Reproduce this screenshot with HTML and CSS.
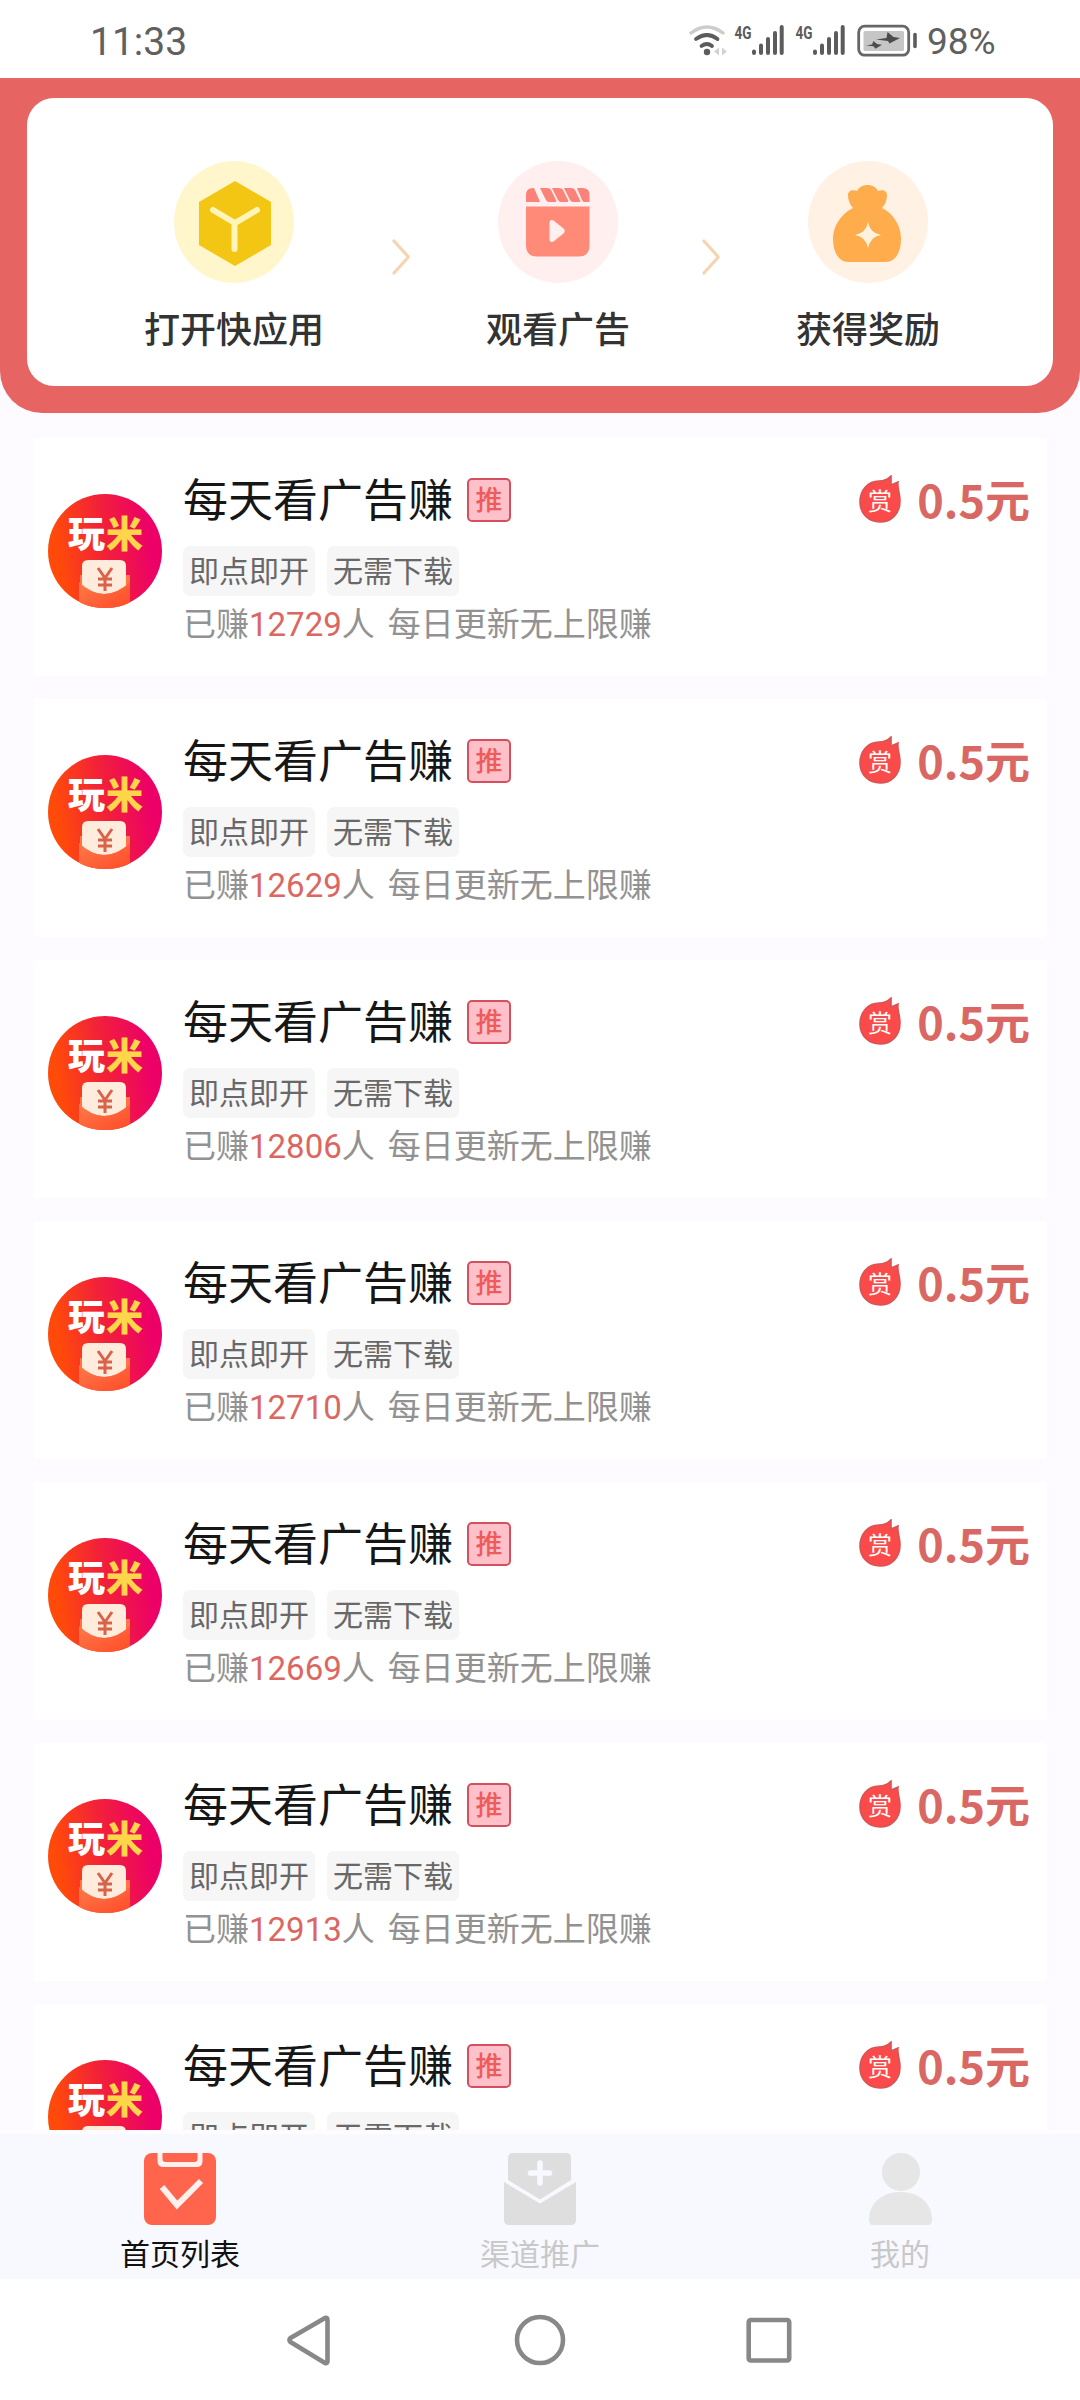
FILE: index.html
```html
<!DOCTYPE html>
<html lang="zh-CN">
<head>
<meta charset="utf-8">
<title>首页列表</title>
<link rel="stylesheet" href="styles.css">
</head>
<body>
<svg class="defs" aria-hidden="true">
  <defs>
    <linearGradient id="logo-bg" x1="0" y1=".5" x2="1" y2=".35"><stop offset=".08" stop-color="#ff4a0a"/><stop offset=".5" stop-color="#f2203a"/><stop offset=".9" stop-color="#ec0068"/></linearGradient>
    <linearGradient id="pocket" x1="0" y1="0" x2="1" y2="1"><stop offset="0" stop-color="#ff7a4a"/><stop offset="1" stop-color="#ff4b28"/></linearGradient>
    <clipPath id="logo-clip"><circle cx="57" cy="57" r="57"/></clipPath>
    <symbol id="logo" viewBox="0 0 114 114">
      <g clip-path="url(#logo-clip)">
        <rect width="114" height="114" fill="url(#logo-bg)"/>
        <path d="M32 81h50v33H32z" fill="#ff7546"/>
        <path d="M34 72q0-6 6-6h32q6 0 6 6v20q-22 16-44 0z" fill="#ffecdc"/>
        <path d="M31 88Q56 112 82 88V114H31z" fill="url(#pocket)"/>
        <path d="M50 74l7 10 7-10M57 84v13M50 85h14M50 91h14" fill="none" stroke="#d9634a" stroke-width="3"/>
      </g>
      <text x="20" y="54" class="logo-text" fill="#fff">玩</text>
      <text x="58" y="54" class="logo-text" fill="#ffd54a">米</text>
    </symbol>
    <symbol id="flame" viewBox="0 0 42 48">
      <path d="M32 1v9l7-3c-1 6 2 11 2 19C41 39 32 47 21 47S1 39 1 27C1 15 9 6 20 6c5 0 9-2 12-5z" fill="#fb4a4a" stroke="#d85454" stroke-width="1.6"/>
      <text x="21" y="34.500" text-anchor="middle" class="flame-text">赏</text>
    </symbol>
  </defs>
</svg>
<div class="screen">
  <header class="status">
    <span class="clock">11:33</span>
    <svg class="status-icons" width="230" height="36" viewBox="688 22 230 36">
      <g fill="none" stroke-linecap="round">
        <path d="M691 32q16-12 32 0" stroke="#ccc" stroke-width="3.4"/>
        <path d="M696 38q11-8 21.500 0M701.500 45q5.500-4 10.500 0" stroke="#5c5c5c" stroke-width="3.800"/>
      </g>
      <circle cx="707" cy="51" r="3.200" fill="#5c5c5c"/>
      <path d="M714 50.500l5-4v8zM727 50.500l-5-4v8z" fill="#d2d2d2"/>
      <g id="signal">
        <text x="734.500" y="37.500" textLength="17" lengthAdjust="spacingAndGlyphs" class="net">4G</text>
        <path d="M754 50.500v1.500M761 44.500v7.500M768 38v14M775 32v20M781.700 26v26" stroke="#5c5c5c" stroke-width="4" stroke-linecap="round"/>
      </g>
      <use href="#signal" x="61"/>
      <rect x="858.700" y="25.200" width="50" height="29" rx="6" fill="none" stroke="#666" stroke-width="2.800"/>
      <rect x="863.500" y="30" width="40.500" height="20" rx="1.500" fill="#c6c6c6"/>
      <path d="M876 38.500l10.500-1.500 1-6 6 5 6.500 1-10.500 5.500-1.500-2.500zM866 44.500l6-1 1.500-3.500 3.500 3 5 .8-6.500 4-2-2.500z" fill="#4c4c4c"/>
      <path d="M915 33.500v12" stroke="#5c5c5c" stroke-width="3.600" stroke-linecap="round"/>
    </svg>
    <span class="percent">98%</span>
  </header>

  <section class="hero">
    <div class="steps">
      <div class="step">
        <svg width="120" height="122" viewBox="0 0 120 122"><ellipse cx="60" cy="61" rx="60" ry="61" fill="#fff6cc"/><path d="M61 20l36 21v43L61 105 25 84V41z" fill="#f3c613"/><path d="M39 49l22 13 22-13M60.500 62v26" fill="none" stroke="#fff5b8" stroke-width="6" stroke-linecap="round"/></svg>
        <span>打开快应用</span>
      </div>
      <svg class="chevron" width="18" height="36" viewBox="0 0 18 36"><path d="M2 2l13.500 15q1 1 0 2L2 34" fill="none" stroke="#f7d4b0" stroke-width="3.200" stroke-linecap="round"/></svg>
      <div class="step">
        <svg width="120" height="122" viewBox="0 0 120 122"><ellipse cx="60" cy="61" rx="60" ry="61" fill="#ffefef"/><path d="M28 45.500h63.500v39q0 11-11 11H39q-11 0-11-11z" fill="#ff8a78"/><path d="M28 41V34q0-7 7-7h1l6 14zM42 27h7q3 0 4 2l5 10q1 2-1 2h-6q-2 0-3-2zM54 27h7q3 0 4 2l5 10q1 2-1 2h-6q-2 0-3-2zM66 27h7q3 0 4 2l5 10q1 2-1 2h-6q-2 0-3-2zM79 27h5.500q7 0 7 7v7H86q-1 0-2-2z" fill="#fb8278"/><path d="M51.500 62q0-4 4-2.500l10 8q2.500 2.500 0 5l-10 8q-4 1.500-4-2.500z" fill="#fff0ee"/></svg>
        <span>观看广告</span>
      </div>
      <svg class="chevron" width="18" height="36" viewBox="0 0 18 36"><path d="M2 2l13.500 15q1 1 0 2L2 34" fill="none" stroke="#f7d4b0" stroke-width="3.200" stroke-linecap="round"/></svg>
      <div class="step">
        <svg width="120" height="122" viewBox="0 0 120 122"><ellipse cx="60" cy="61" rx="60" ry="61" fill="#fff1e3"/><path d="M45 47c-3-3-5-8-5-13 0-4 4-6 9-4 4-8 17-8 21 0 5-2 9 0 9 4 0 5-2 10-5 13 12 6 19 18 19 31 0 15-7 23-15 23H40c-8 0-15-8-15-23 0-13 8-25 20-31z" fill="#ffac4c"/><path d="M60 61q2 11 13 13-11 2-13 13-2-11-13-13 11-2 13-13z" fill="#fff3df"/></svg>
        <span>获得奖励</span>
      </div>
    </div>
  </section>

  <main class="list" id="list"></main>

  <nav class="tabs">
    <div class="tab active">
      <svg width="72" height="72" viewBox="0 0 72 72"><rect width="72" height="72" rx="8" fill="#ff644d"/><path d="M13.500 0v8q0 6 6 6h33q6 0 6-6V0h-5v6q0 3-3 3h-29q-3 0-3-3V0z" fill="#fff0ee"/><path d="M18 34l15 18 24-24" fill="none" stroke="#fff0ee" stroke-width="6"/></svg>
      <span>首页列表</span>
    </div>
    <div class="tab">
      <svg width="72" height="72" viewBox="0 0 72 72"><path d="M4 5q0-5 5-5h53q5 0 5 5v22L36 46.500 4 27zM0 29l36 21.500L72 29v38q0 5-5 5H5q-5 0-5-5z" fill="#dedede"/><path d="M36 10v20M26.500 20h19" stroke="#f8f8ff" stroke-width="5.500" stroke-linecap="round"/></svg>
      <span>渠道推广</span>
    </div>
    <div class="tab">
      <svg width="72" height="72" viewBox="0 0 72 72"><circle cx="37" cy="19" r="19" fill="#e6e6e6"/><path d="M36.500 39C55 39 68 50 68 67q0 5-4 5H9q-4 0-4-5C5 50 18 39 36.500 39z" fill="#e6e6e6"/></svg>
      <span>我的</span>
    </div>
  </nav>

  <footer class="system">
    <svg width="1080" height="60" viewBox="0 0 1080 60" fill="none" stroke="#888" stroke-width="4.600" stroke-linejoin="round"><path d="M290.500 28L325 8q2.500-1 2.500 2v41q0 3-2.500 2L290.500 32q-2-2 0-4z"/><circle cx="540" cy="30" r="23"/><rect x="748.700" y="10" width="40.500" height="40.500" rx="2"/></svg>
  </footer>
</div>
<script src="list.js"></script>
</body>
</html>
```
FILE: list.js
```js
const counts = [12729, 12629, 12806, 12710, 12669, 12913, 12729];

document.getElementById("list").innerHTML = counts.map((count) => `
  <article class="item">
    <svg class="logo" width="114" height="114"><use href="#logo"/></svg>
    <div class="info">
      <div class="title"><h2>每天看广告赚</h2><span class="badge">推</span></div>
      <div class="tags"><span>即点即开</span><span>无需下载</span></div>
      <p class="stats">已赚<em>${count}</em>人<span>每日更新无上限赚</span></p>
    </div>
    <div class="price"><svg width="42" height="48"><use href="#flame"/></svg><b>0.5元</b></div>
  </article>`).join("");
```
FILE: styles.css
```css
* { box-sizing: border-box; }
body { margin: 0; background: #fff; font-family: Roboto, "Noto Sans CJK SC", sans-serif; }
svg { display: block; flex: none; }
.defs { position: absolute; width: 0; height: 0; }
.screen { width: 1080px; height: 2400px; display: flex; flex-direction: column; overflow: hidden; background: #fdfbff; }

.status { height: 78px; flex: none; display: flex; align-items: center; padding: 4px 84px 0 90px; background: #fff; color: #606060; }
.clock { font-size: 39px; line-height: 46px; padding-top: 2px; flex: 1; }
.status-icons { margin-right: 9px; }
.percent { font-size: 37px; line-height: 44px; padding-top: 2px; width: 69px; white-space: nowrap; }
.net { font: bold 18px Roboto, sans-serif; fill: #5c5c5c; }

.hero { height: 335px; flex: none; padding: 20px 27px 27px; background: #e66462; border-radius: 0 0 42px 42px; }
.steps { height: 288px; background: #fff; border-radius: 27px; display: flex; padding: 63px 0 0 117px; }
.step { display: flex; flex-direction: column; align-items: center; font-size: 36px; font-weight: 500; color: #333; }
.step span { line-height: 52px; margin-top: 22px; white-space: nowrap; }
.chevron { margin: 78px 76px 0 72px; }
.chevron:nth-child(2) { margin-left: 68px; }

.list { height: 1717px; flex: none; padding: 25px 33px 0; overflow: hidden; display: flex; flex-direction: column; gap: 23px; }
.item { height: 238px; flex: none; background: #fff; border-radius: 4px; display: flex; padding: 30px 17px 0 15px; }
.logo { margin-top: 26px; }
.logo-text { font: 900 37px "Noto Sans CJK SC", sans-serif; }
.info { flex: 1; margin-left: 21px; }
.title { display: flex; align-items: center; gap: 14px; height: 64px; }
h2 { margin: 0; padding-top: 4px; font-size: 45px; font-weight: 400; line-height: 64px; color: #161616; }
.badge { width: 44px; height: 44px; border: 2px solid #d4505f; border-radius: 5px; background: #ffc1c9; color: #ee5b5b; font-size: 27px; font-weight: 500; line-height: 42px; text-align: center; }
.tags { display: flex; gap: 12px; margin-top: 14px; }
.tags span { height: 50px; padding: 0 6px; background: #f6f6f6; border-radius: 7px; font-size: 30px; line-height: 51px; color: #686868; }
.stats { margin: 6px 0 0; font-size: 33px; line-height: 46px; color: #929292; white-space: nowrap; }
.stats em { font-style: normal; color: #dc6660; }
.stats span { margin-left: 13px; }
.price { display: flex; align-items: center; height: 61px; gap: 16px; color: #d96864; }
.price b { font: 700 45px/61px "Noto Sans CJK SC", sans-serif; }
.flame-text { font: 24px "Noto Sans CJK SC", sans-serif; fill: #fff; }

.tabs { height: 149px; flex: none; display: flex; background: #f8f8ff; border-top: 4px solid #fefcff; padding-top: 19px; }
.tab { flex: 1; display: flex; flex-direction: column; align-items: center; font-size: 30px; color: #c8c8c8; }
.tab span { line-height: 44px; margin-top: 8px; }
.tab.active { color: #111; }
.system { flex: 1; background: #fff; padding-top: 31px; }
```
